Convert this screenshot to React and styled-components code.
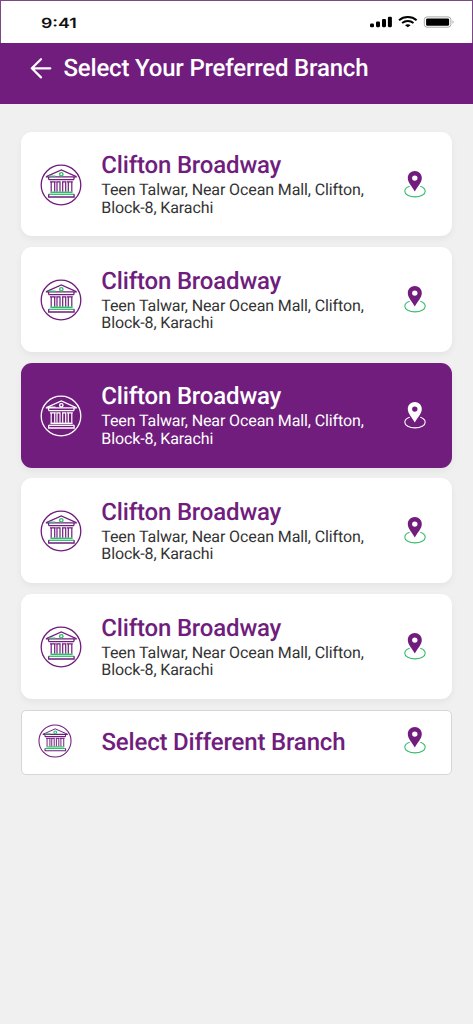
import React from "react";
import styled, { createGlobalStyle } from "styled-components";

const theme = {
    primary: "#701d7d",
    accent: "#35bb6d",
    background: "#f0f0f0",
    text: "#333333",
    white: "#ffffff",
};

const GlobalStyle = createGlobalStyle`
    * {
        box-sizing: border-box;
    }

    body {
        margin: 0;
        background: ${theme.background};
        font-family: Roboto, sans-serif;
        text-rendering: geometricPrecision;
    }
`;

const Screen = styled.div`
    width: 473px;
    height: 1024px;
    overflow: hidden;
    background: ${theme.background};
`;

const StatusBar = styled.div`
    height: 42.5px;
    padding: 4px 17px 0 40px;
    display: flex;
    align-items: center;
    justify-content: space-between;
    background: ${theme.white};
    border: 1px solid #7b4a85;
    border-bottom: none;
`;

const Time = styled.span`
    font-family: Inter, sans-serif;
    font-size: 14px;
    font-weight: 600;
    line-height: 18px;
    color: #111111;
    transform: scaleX(1.27);
    transform-origin: left center;
`;

const StatusIcons = styled.div`
    display: flex;
    align-items: center;
    padding-bottom: 3px;
`;

const Header = styled.header`
    height: 61.5px;
    padding: 0 30px 10px;
    display: flex;
    align-items: center;
    gap: 11.5px;
    background: ${theme.primary};
    color: ${theme.white};
`;

const PageTitle = styled.h1`
    margin: 0;
    font-size: 24px;
    font-weight: 500;
    line-height: 28px;
    letter-spacing: -0.19px;
    white-space: nowrap;
`;

const BranchList = styled.main`
    padding: 27.7px 21.5px 0 21px;
    display: flex;
    flex-direction: column;
    gap: 10.9px;
`;

const BranchCard = styled.div`
    height: 104.7px;
    padding: 1px 26px 0 19.3px;
    display: flex;
    align-items: center;
    border-radius: 11px;
    background: ${({ $selected }) => ($selected ? theme.primary : theme.white)};
    box-shadow: 0 3px 7px rgba(0, 0, 0, 0.05);
`;

const BranchInfo = styled.div`
    flex: 1;
    margin-left: 19px;
    padding-bottom: 1.8px;
`;

const BranchName = styled.h2`
    margin: 0;
    font-size: 24px;
    font-weight: 500;
    line-height: 28px;
    letter-spacing: -0.18px;
    white-space: nowrap;
    color: ${({ $selected }) => ($selected ? theme.white : theme.primary)};
`;

const BranchAddress = styled.p`
    margin: 2px 0 0;
    font-size: 16px;
    line-height: 17.3px;
    letter-spacing: -0.11px;
    white-space: nowrap;
    color: ${({ $selected }) => ($selected ? theme.white : theme.text)};
`;

const OtherBranchButton = styled.button`
    height: 65px;
    padding: 0 25px 2px 16px;
    display: flex;
    align-items: center;
    justify-content: space-between;
    border: 1px solid #d6d6d6;
    border-radius: 5px;
    background: ${theme.white};
    font-family: inherit;
    text-align: left;
    text-rendering: inherit;
`;

const OtherBranchLabel = styled.span`
    flex: 1;
    margin-left: 29.5px;
    padding-top: 1px;
    font-size: 24px;
    font-weight: 500;
    line-height: 28px;
    letter-spacing: -0.18px;
    color: ${theme.primary};
`;

const BankIcon = ({ size = 42, selected }) => {
    const main = selected ? theme.white : theme.primary;
    const accent = selected ? theme.white : theme.accent;

    return (
        <svg width={size} height={size} viewBox="0 0 42 42" fill="none" strokeWidth="1.2" aria-hidden="true">
            <circle cx="21" cy="21" r="19.8" stroke={main} strokeWidth="1.3" />
            <path d="M6.3 12.6 21.3 6l15 6.6" stroke={main} />
            <path d="M5.8 12.8h31M8.6 15.6h25.4M8.6 12.8v2.8M34 12.8v2.8" stroke={main} strokeWidth="1.3" />
            <path d="M8.5 12.2h7" stroke={accent} strokeWidth="1.3" />
            <circle cx="21.3" cy="10.3" r="1.7" stroke={accent} strokeWidth="1.4" />
            <path
                d="M10 17.8h5.8M16.2 17.8h4.4M22 17.8h4.4M27 17.8h5.8M11.2 17.8v10M14.7 17.8v10M17 17.8v10M20 17.8v10M22.7 17.8v10M25.7 17.8v10M28.3 17.8v10M31.8 17.8v10"
                stroke={main}
            />
            <path d="M10.4 28.3h22.2" stroke={accent} strokeWidth="1.5" />
            <path d="M8.6 30.3h25.6" stroke={accent} strokeWidth="1.3" />
            <path d="M8.7 30.2V33h25.4v-2.8" stroke={main} strokeWidth="1.3" />
        </svg>
    );
};

const LocationIcon = ({ selected }) => {
    const main = selected ? theme.white : theme.primary;
    const accent = selected ? theme.white : theme.accent;

    return (
        <svg width="22" height="28" viewBox="0 0 22 28" fill="none" aria-hidden="true">
            <path d="M5.7 15.2C2.7 16.2.8 18 .8 20.2c0 3.2 4.5 5.7 10.2 5.7s10.2-2.5 10.2-5.7c0-2.2-2-4-4.9-5" stroke={accent} strokeWidth="1.1" />
            <path
                fillRule="evenodd"
                clipRule="evenodd"
                d="M10.8 0C6.9 0 3.8 3 3.8 6.9c0 4.8 4.4 8.6 7 13.6 2.6-5 7-8.8 7-13.6C17.8 3 14.7 0 10.8 0Zm0 9.8a2.7 2.7 0 1 0 0-5.4 2.7 2.7 0 0 0 0 5.4Z"
                fill={main}
            />
        </svg>
    );
};

const BackIcon = () => (
    <svg width="22" height="22" viewBox="0 0 22 22" fill="none" stroke="currentColor" strokeWidth="2.2" strokeLinecap="round" strokeLinejoin="round" aria-hidden="true">
        <path d="M20.3 11.3H1.8M11 2.2 1.8 11.3l9.2 9.1" />
    </svg>
);

const DeviceStatus = () => (
    <svg width="86" height="14" viewBox="0 0 86 14" fill="none" aria-hidden="true">
        <rect x="1" y="8.5" width="4" height="3.7" rx="1.3" fill="#000" />
        <rect x="7" y="6.5" width="4" height="5.7" rx="1.1" fill="#000" />
        <rect x="13" y="4.1" width="4" height="8.1" rx="1.1" fill="#000" />
        <rect x="18.9" y="1.8" width="4" height="10.4" rx="1.1" fill="#000" />
        <path d="M30 5.2c5-4.2 12.7-4.2 17.6 0" stroke="#000" strokeWidth="2" />
        <path d="M33.1 8c3.3-2.6 8.2-2.6 11.4 0" stroke="#000" strokeWidth="1.9" />
        <path d="M36 10.2c1.8-1.3 3.8-1.3 5.6 0L38.8 12.3Z" fill="#000" />
        <rect x="55.3" y="1.9" width="26.6" height="10.3" rx="2.8" stroke="#a9a9a9" />
        <rect x="57.1" y="3.5" width="23" height="7.2" rx="1.3" fill="#000" />
        <path d="M83.5 5.2c1.5.6 1.5 3 0 3.6Z" fill="#a9a9a9" />
    </svg>
);

const address = ["Teen Talwar, Near Ocean Mall, Clifton,", "Block-8, Karachi"];

const branches = [
    { id: 1, name: "Clifton Broadway", address },
    { id: 2, name: "Clifton Broadway", address },
    { id: 3, name: "Clifton Broadway", address, selected: true },
    { id: 4, name: "Clifton Broadway", address },
    { id: 5, name: "Clifton Broadway", address },
];

const App = () => {
    return (
        <>
            <GlobalStyle />
            <Screen>
                <StatusBar>
                    <Time>9:41</Time>
                    <StatusIcons>
                        <DeviceStatus />
                    </StatusIcons>
                </StatusBar>
                <Header>
                    <BackIcon />
                    <PageTitle>Select Your Preferred Branch</PageTitle>
                </Header>
                <BranchList>
                    {branches.map(({ id, name, address, selected }) => (
                        <BranchCard key={id} $selected={selected}>
                            <BankIcon selected={selected} />
                            <BranchInfo>
                                <BranchName $selected={selected}>{name}</BranchName>
                                <BranchAddress $selected={selected}>
                                    {address[0]}
                                    <br />
                                    {address[1]}
                                </BranchAddress>
                            </BranchInfo>
                            <LocationIcon selected={selected} />
                        </BranchCard>
                    ))}
                    <OtherBranchButton type="button">
                        <BankIcon size={34} />
                        <OtherBranchLabel>Select Different Branch</OtherBranchLabel>
                        <LocationIcon />
                    </OtherBranchButton>
                </BranchList>
            </Screen>
        </>
    );
};

export default App;
